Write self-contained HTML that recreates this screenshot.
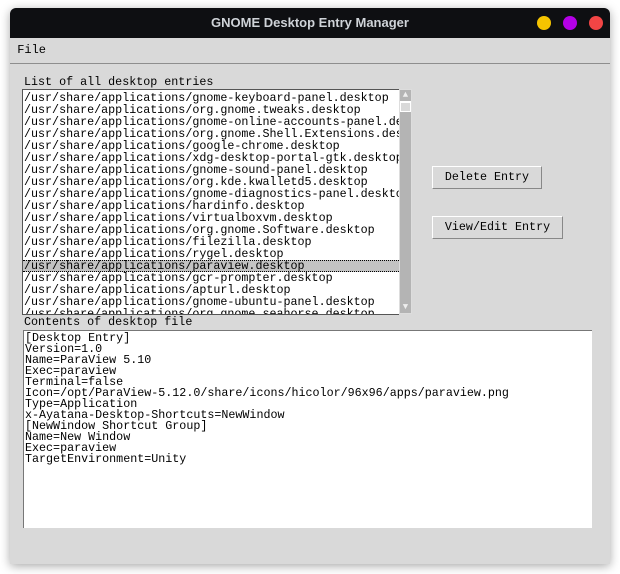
<!DOCTYPE html>
<html><head><style>
body{margin:0;width:620px;height:574px;background:#fff;position:relative;overflow:hidden;font-family:"Liberation Mono",monospace;}
.win{position:absolute;left:10px;top:8px;width:600px;height:556px;background:#d9d9d9;border-radius:6px 6px 0 0;box-shadow:0 2px 10px rgba(0,0,0,.35);overflow:hidden}
.title{position:absolute;left:0;top:0;width:600px;height:30px;background:#0e0f12;color:#cfd3d8;font:bold 13px "Liberation Sans",sans-serif;text-align:center;line-height:30px}
.dot{position:absolute;top:8px;width:14px;height:14px;border-radius:50%}
.menu{position:absolute;left:0;top:30px;width:600px;height:25px;border-bottom:1px solid #8e8e8e;font-size:12px;line-height:25px}
.t{position:absolute;font-size:11.7px;line-height:12px;white-space:pre;color:#000}
.lb{position:absolute;left:12px;top:81px;width:376px;height:222px;padding-top:2px;background:#fff;border:1px solid #555;border-right:none;overflow:hidden}
.lb div{height:12px;line-height:12px;font-size:11.7px;white-space:pre;padding-left:1px}
.sb{position:absolute;left:389px;top:81px;width:13px;height:225px;background:#b4b4b4;border:1px solid #ddd;box-sizing:border-box}
.btn{position:absolute;height:21px;border:1px solid #fff;border-right-color:#888;border-bottom-color:#888;background:#d9d9d9;font-size:11.7px;line-height:21px;text-align:center}
.ta{position:absolute;left:13px;top:322px;width:567px;height:195px;padding-top:2px;background:#fff;border-left:1px solid #777;border-top:1px solid #777;font-size:11.7px;line-height:11px;white-space:pre;padding-left:1px}
</style></head><body>
<div class="win">
<div class="title">GNOME Desktop Entry Manager
<div class="dot" style="left:527px;background:#f5c400"></div>
<div class="dot" style="left:553px;background:#b400e6"></div>
<div class="dot" style="left:579px;background:#f24545"></div></div>
<div class="menu">&nbsp;File</div>
<div class="t" style="left:14px;top:68px">List of all desktop entries</div>
<div class="lb">
<div>/usr/share/applications/gnome-keyboard-panel.desktop</div>
<div>/usr/share/applications/org.gnome.tweaks.desktop</div>
<div>/usr/share/applications/gnome-online-accounts-panel.desktop</div>
<div>/usr/share/applications/org.gnome.Shell.Extensions.desktop</div>
<div>/usr/share/applications/google-chrome.desktop</div>
<div>/usr/share/applications/xdg-desktop-portal-gtk.desktop</div>
<div>/usr/share/applications/gnome-sound-panel.desktop</div>
<div>/usr/share/applications/org.kde.kwalletd5.desktop</div>
<div>/usr/share/applications/gnome-diagnostics-panel.desktop</div>
<div>/usr/share/applications/hardinfo.desktop</div>
<div>/usr/share/applications/virtualboxvm.desktop</div>
<div>/usr/share/applications/org.gnome.Software.desktop</div>
<div>/usr/share/applications/filezilla.desktop</div>
<div>/usr/share/applications/rygel.desktop</div>
<div style="background:#c3c3c3;border-top:1px dotted #000;border-bottom:1px dotted #000;height:10px;line-height:10px">/usr/share/applications/paraview.desktop</div>
<div>/usr/share/applications/gcr-prompter.desktop</div>
<div>/usr/share/applications/apturl.desktop</div>
<div>/usr/share/applications/gnome-ubuntu-panel.desktop</div>
<div>/usr/share/applications/org.gnome.seahorse.desktop</div>
</div>
<div class="sb"><div style="position:absolute;left:0;top:0;width:11px;height:11px;border-bottom:1px solid #fff;font-size:9px;color:#eee;line-height:11px;text-align:center">▲</div>
<div style="position:absolute;left:0;top:12px;width:11px;height:10px;background:#d9d9d9;border:1px solid #fff;box-sizing:border-box"></div>
<div style="position:absolute;left:0;bottom:0;width:11px;height:11px;font-size:9px;color:#eee;line-height:11px;text-align:center">▼</div></div>
<div class="btn" style="left:422px;top:158px;width:108px">Delete Entry</div>
<div class="btn" style="left:422px;top:208px;width:129px">View/Edit Entry</div>
<div class="t" style="left:14px;top:308px">Contents of desktop file</div>
<div class="ta">[Desktop Entry]
Version=1.0
Name=ParaView 5.10
Exec=paraview
Terminal=false
Icon=/opt/ParaView-5.12.0/share/icons/hicolor/96x96/apps/paraview.png
Type=Application
x-Ayatana-Desktop-Shortcuts=NewWindow
[NewWindow Shortcut Group]
Name=New Window
Exec=paraview
TargetEnvironment=Unity</div>
</div>
</body></html>
